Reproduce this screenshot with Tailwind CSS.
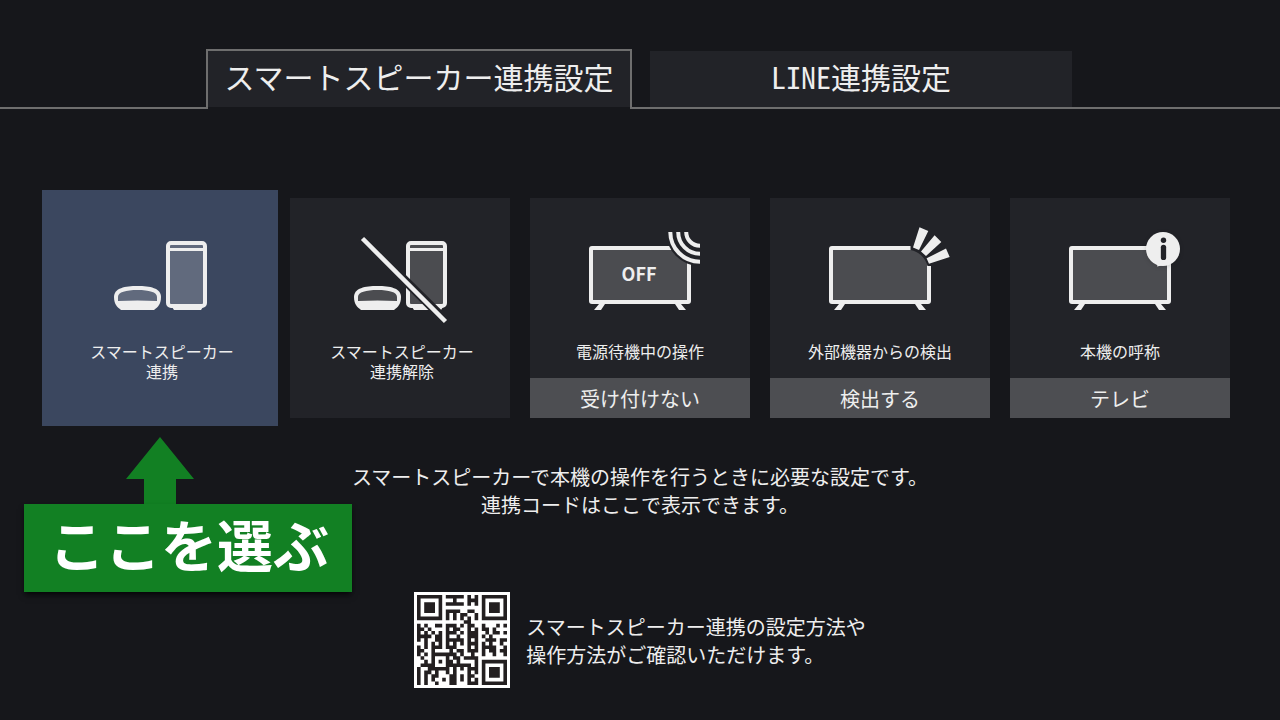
<!DOCTYPE html>
<html lang="ja">
<head>
  <meta charset="UTF-8">
  <meta name="viewport" content="width=device-width, initial-scale=1.0">
  <title>スマートスピーカー連携設定</title>
  <script src="https://cdn.jsdelivr.net/npm/@tailwindcss/browser@4"></script>
</head>
<body class="min-h-screen bg-[#16171b] text-[#eeeeee] font-['Liberation_Sans','Noto_Sans_CJK_JP',sans-serif]">
  <!-- Pestañas -->
  <nav class="flex items-end pt-[49px]">
    <div class="flex-1 border-b-2 border-[#6e6e6e]"></div>
    <button type="button" class="w-[426px] h-[60px] border-2 border-b-0 border-[#6e6e6e] pb-0.5 text-3xl">
      <span class="flex h-14 items-center justify-center bg-[#222328]">スマートスピーカー連携設定</span>
    </button>
    <div class="w-[442px] border-b-2 border-[#6e6e6e] pl-[18px]">
      <button type="button" class="block w-[422px] h-14 bg-[#222328] pb-1.5 text-3xl font-['Noto_Sans_CJK_JP',sans-serif] [font-feature-settings:'hwid']">LINE連携設定</button>
    </div>
    <div class="flex-1 border-b-2 border-[#6e6e6e]"></div>
  </nav>

  <main>
    <!-- Tarjetas -->
    <div class="relative mt-[89px] px-[50px]">
      <div class="grid grid-cols-5 gap-5">
        <button type="button" class="flex h-[220px] flex-col items-center bg-[#3b475f] ring-8 ring-[#3b475f]">
          <svg class="h-[145px] w-[220px] shrink-0" viewBox="0 0 220 145" aria-hidden="true">
            <path d="M122 109H153L151 112H124Z" fill="#eee"/>
            <rect x="118" y="45" width="37" height="63" rx="3" fill="#616a7d" stroke="#eee" stroke-width="4"/>
            <path d="M118 51.5H155M118 107.5H155" stroke="#eee" stroke-width="3"/>
            <path d="M64 99C64 90 75 88 87.5 88S111 90 111 99C111 106 108 109 104 112H71C67 109 64 106 64 99Z" fill="#eee"/>
            <path d="M68 103V99C68 94 76 92 87.5 92S107 94 107 99V103Q87.5 102 68 103Z" fill="#616a7d"/>
          </svg>
          <span class="pl-1 text-base leading-5">スマートスピーカー<br>連携</span>
        </button>

        <button type="button" class="flex h-[220px] flex-col items-center bg-[#222328]">
          <svg class="h-[145px] w-[220px] shrink-0" viewBox="0 0 220 145" aria-hidden="true">
            <path d="M122 109H153L151 112H124Z" fill="#eee"/>
            <rect x="118" y="45" width="37" height="63" rx="3" fill="#4b4c50" stroke="#eee" stroke-width="4"/>
            <path d="M118 51.5H155M118 107.5H155" stroke="#eee" stroke-width="3"/>
            <path d="M64 99C64 90 75 88 87.5 88S111 90 111 99C111 106 108 109 104 112H71C67 109 64 106 64 99Z" fill="#eee"/>
            <path d="M68 103V99C68 94 76 92 87.5 92S107 94 107 99V103Q87.5 102 68 103Z" fill="#4b4c50"/>
            <path d="M73 41L156 123" stroke="#222328" stroke-width="9"/>
            <path d="M72.5 40.5L155.5 123.5" stroke="#eee" stroke-width="4.5"/>
          </svg>
          <span class="pl-1 text-base leading-5">スマートスピーカー<br>連携解除</span>
        </button>

        <button type="button" class="flex h-[220px] flex-col items-center bg-[#222328]">
          <svg class="h-[145px] w-[220px] shrink-0" viewBox="0 0 220 145" aria-hidden="true">
            <path d="M69 106H75L71 112H64ZM145 106H151L156 112H149Z" fill="#eee"/>
            <rect x="61" y="50" width="98" height="54" rx="1" fill="#4b4c50" stroke="#eee" stroke-width="4"/>
            <path d="M136 34A34 34 0 0 0 170 68V34Z" fill="#222328"/>
            <path d="M140.3 34A29.7 29.7 0 0 0 170 63.7M148.2 34A21.8 21.8 0 0 0 170 55.8M156.2 34A13.8 13.8 0 0 0 170 47.8" fill="none" stroke="#eee" stroke-width="4"/>
            <text x="109" y="83" text-anchor="middle" class="text-lg font-bold font-['Noto_Sans_CJK_JP',sans-serif]" fill="#eee">OFF</text>
          </svg>
          <span class="text-base leading-5">電源待機中の操作</span>
          <span class="mt-auto flex h-10 w-full items-center justify-center bg-[#4d4e52] pt-1 text-xl">受け付けない</span>
        </button>

        <button type="button" class="flex h-[220px] flex-col items-center bg-[#222328]">
          <svg class="h-[145px] w-[220px] shrink-0" viewBox="0 0 220 145" aria-hidden="true">
            <path d="M69 106H75L71 112H64ZM145 106H151L156 112H149Z" fill="#eee"/>
            <rect x="61" y="50" width="98" height="54" rx="1" fill="#4b4c50" stroke="#eee" stroke-width="4"/>
            <path d="M140.5 46H163V68H157.5A22 22 0 0 0 140.5 52Z" fill="#222328"/>
            <path d="M149.5 29.3L158.3 33L149 52L143 49.6ZM164.6 37.3L171.3 44L156 58L151 53.6ZM176 50.6L179.7 59L159 65.7L156.6 60.3Z" fill="#eee"/>
          </svg>
          <span class="text-base leading-5">外部機器からの検出</span>
          <span class="mt-auto flex h-10 w-full items-center justify-center bg-[#4d4e52] pt-1 text-xl">検出する</span>
        </button>

        <button type="button" class="flex h-[220px] flex-col items-center bg-[#222328]">
          <svg class="h-[145px] w-[220px] shrink-0" viewBox="0 0 220 145" aria-hidden="true">
            <path d="M69 106H75L71 112H64ZM145 106H151L156 112H149Z" fill="#eee"/>
            <rect x="61" y="50" width="98" height="54" rx="1" fill="#4b4c50" stroke="#eee" stroke-width="4"/>
            <g class="drop-shadow-sm">
              <circle cx="153" cy="51" r="17" fill="#eee"/>
              <path d="M148 65L147 68.5L156 66.5Z" fill="#eee"/>
            </g>
            <circle cx="153.5" cy="42.3" r="2.7" fill="#222328"/>
            <path d="M153.5 49.3V59.4" stroke="#222328" stroke-width="5.3" stroke-linecap="round"/>
          </svg>
          <span class="text-base leading-5">本機の呼称</span>
          <span class="mt-auto flex h-10 w-full items-center justify-center bg-[#4d4e52] pt-1 text-xl">テレビ</span>
        </button>
      </div>

      <!-- Aviso sobre la primera tarjeta -->
      <div class="absolute left-6 top-[239px] flex flex-col">
        <svg class="ml-[102px] h-[67px] w-[68px]" viewBox="0 0 68 67" aria-hidden="true">
          <path d="M34 0L68 42H50V67H18V42H0Z" fill="#128023"/>
        </svg>
        <p class="flex h-[88px] w-[328px] items-center justify-center bg-[#128023] pl-0.5 text-[56px] font-bold leading-none text-white shadow-md shadow-black/60">ここを選ぶ</p>
      </div>
    </div>

    <p class="mt-[46px] text-center text-xl leading-7">スマートスピーカーで本機の操作を行うときに必要な設定です。<br>連携コードはここで表示できます。</p>

    <div class="mt-[72px] flex items-center justify-center gap-4">
      <div class="size-24 bg-white p-[3px]">
        <svg id="qr" class="size-full" viewBox="0 0 25 25" role="img" aria-label="QRコード"></svg>
      </div>
      <p class="pt-1 text-xl leading-7">スマートスピーカー連携の設定方法や<br>操作方法がご確認いただけます。</p>
    </div>
  </main>

  <script>
    // Módulos del código QR, una cadena por fila
    const rows = [
      "#######.#####.#.#.#######",
      "#.....#...#...###.#.....#",
      "#.###.#.#####.#.#.#.###.#",
      "#.###.#...........#.###.#",
      "#.###.#.####..##..#.###.#",
      "#.....#.#.#.##..#.#.....#",
      "#######.#.#.#.#.#.#######",
      ".............##..........",
      "#.#..##.###.#.##..#...#.#",
      "##.#....#.##..#.#.##.#...",
      "#.#.#.#.###.#.###..#.##.#",
      "####.##.#..#..###.#.#....",
      "#.#..##.#####.#.#..###.##",
      "..#.#.#.#.#.#.###.#.#..#.",
      "#.#.###.###...#.#.####..#",
      "##..#....#.##.###.#.##.##",
      "#.#.#######.#..#..#..#..#",
      ".#..#...#.##.####........",
      "..#.#.#.##.#....#.#######",
      ".####...#######.#.#.....#",
      "#..######.#.#.###.#.###.#",
      "#.##.#..#.#...#.#.#.###.#",
      "#.#.##...##.#.##..#.###.#",
      "#.#.#..#.##.#.#.#.#.....#",
      "#.#..#...##...###.#######"
    ];
    let d = '';
    rows.forEach((row, y) => {
      [...row].forEach((cell, x) => {
        if (cell === '#') d += `M${x} ${y}h1v1h-1z`;
      });
    });
    const path = document.createElementNS('http://www.w3.org/2000/svg', 'path');
    path.setAttribute('d', d);
    path.setAttribute('fill', '#231f20');
    document.getElementById('qr').appendChild(path);
  </script>
</body>
</html>
